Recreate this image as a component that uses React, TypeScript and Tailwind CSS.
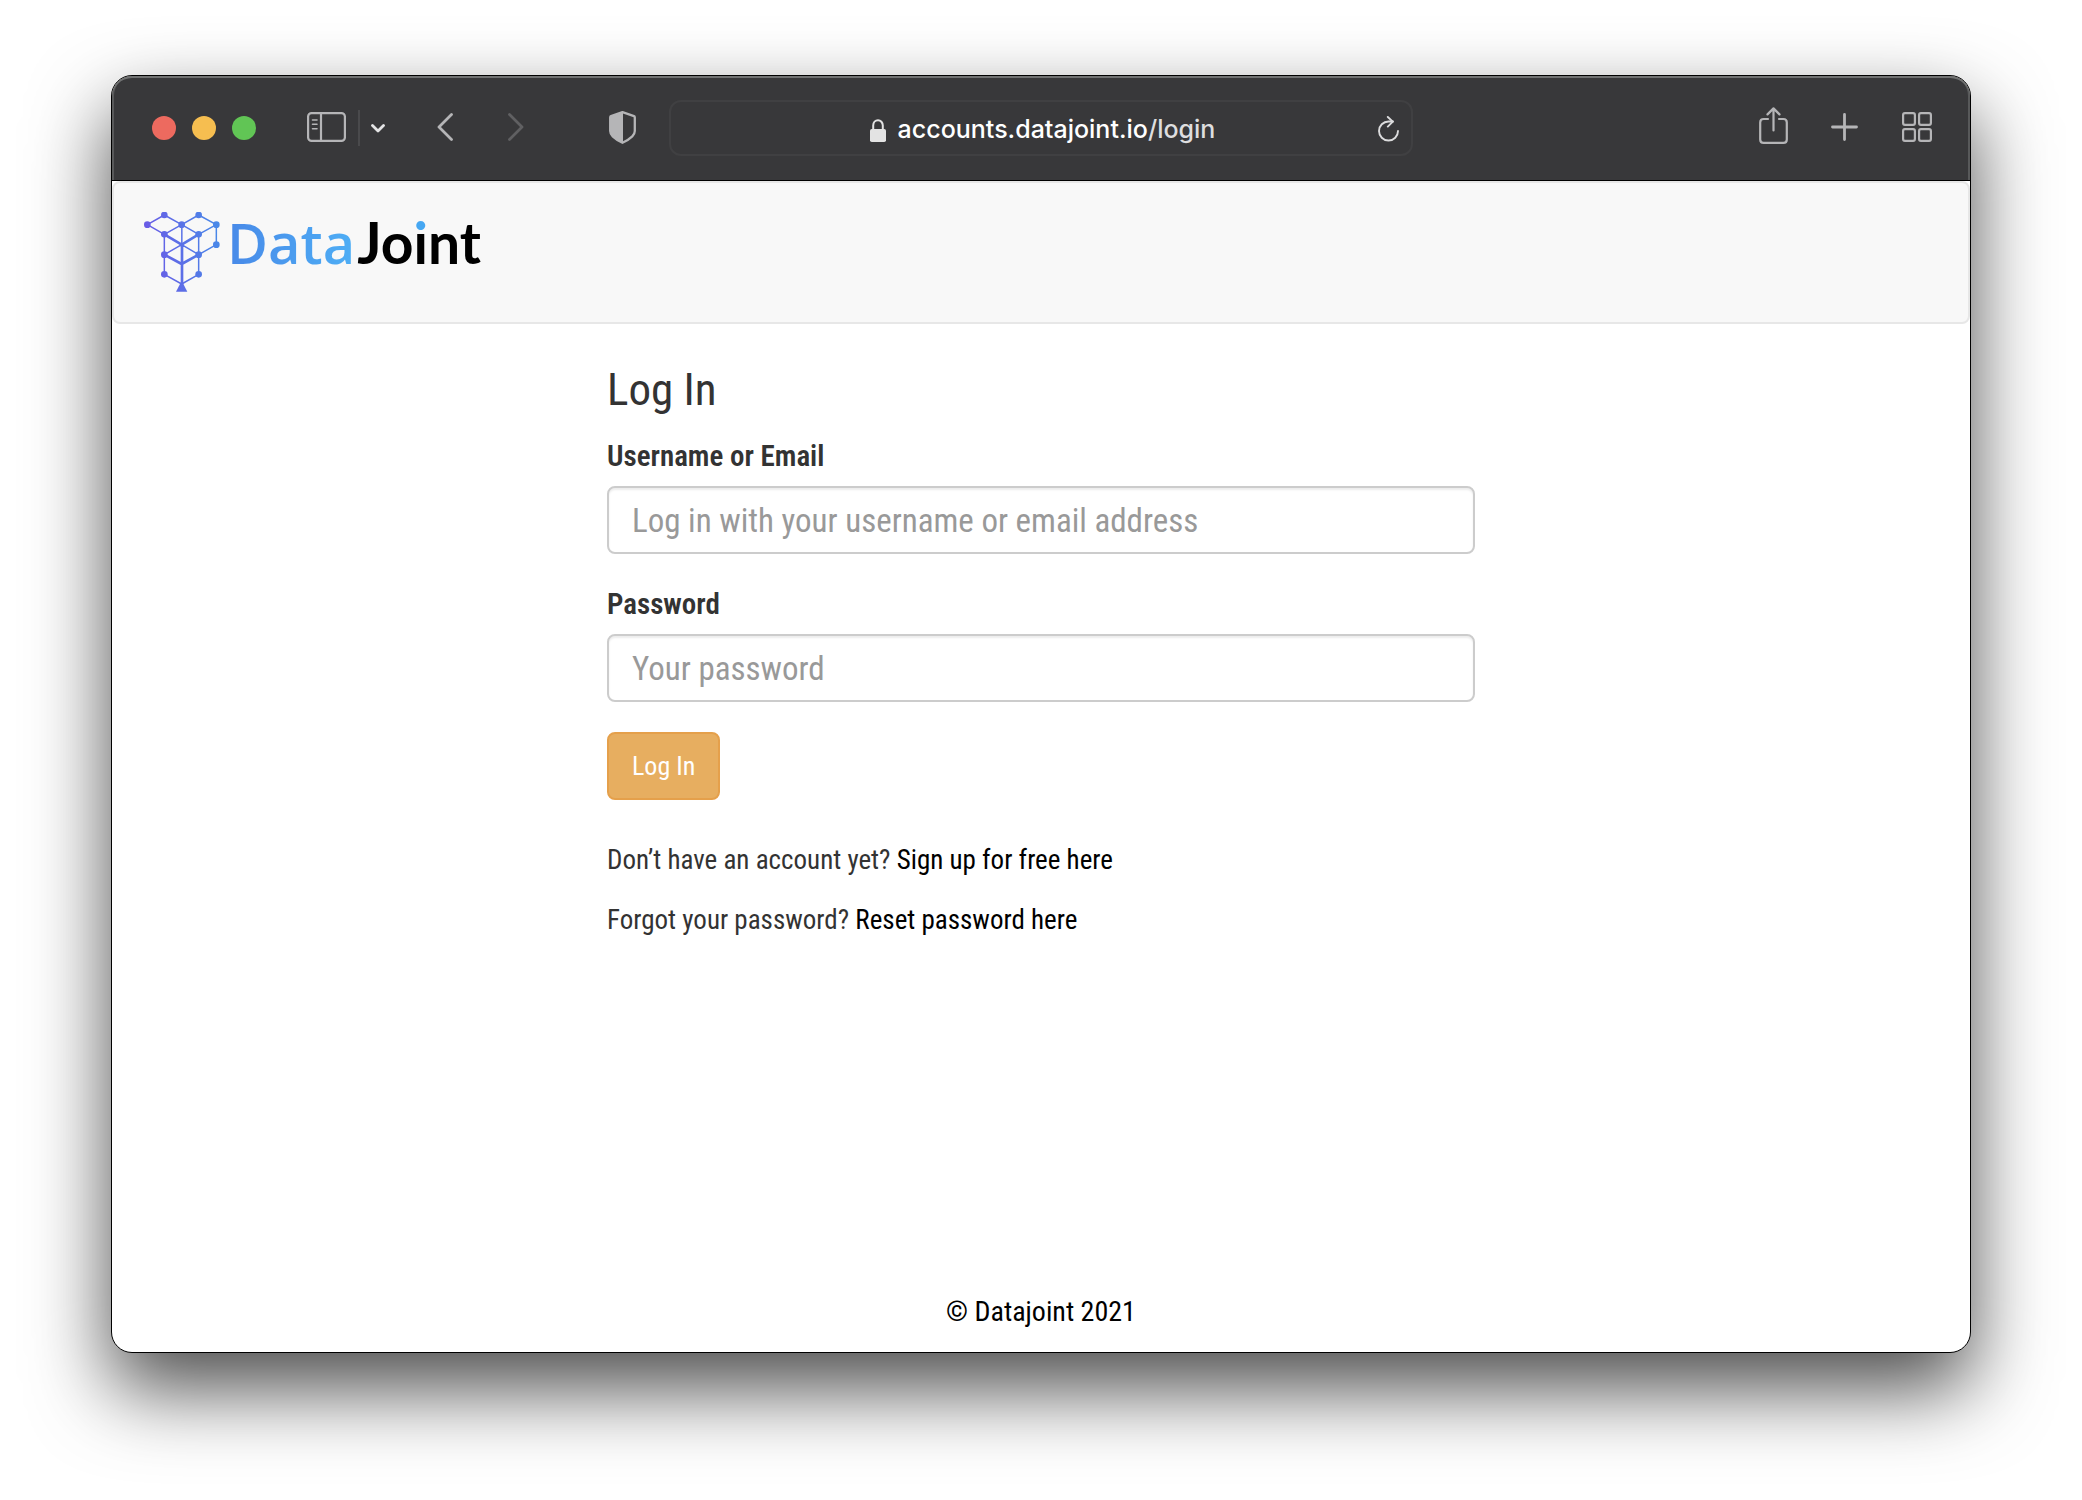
import type { ReactNode } from "react";

const narrow = "font-['Roboto_Condensed',Roboto,sans-serif]";

function IconButton({ label, children, className = "" }: { label: string; children: ReactNode; className?: string }) {
  return (
    <button type="button" aria-label={label} className={`shrink-0 ${className}`}>
      {children}
    </button>
  );
}

function TitleBar() {
  return (
    <header className="grid h-[105px] grid-cols-[3fr_4fr_3fr] items-center border-b border-black bg-[#38383a] text-[#b5b5b7] shadow-[inset_0_2px_0_#717272,inset_2px_0_0_#58595a,inset_-2px_0_0_#58595a] rounded-t-[20px]">
      <div className="flex items-center pr-[33px] pl-10">
        <div className="flex gap-4">
          <button type="button" aria-label="Close" className="size-6 rounded-full bg-[#ed6a5f]" />
          <button type="button" aria-label="Minimize" className="size-6 rounded-full bg-[#f6be50]" />
          <button type="button" aria-label="Zoom" className="size-6 rounded-full bg-[#61c555]" />
        </div>
        <IconButton label="Sidebar" className="ml-[51px] pb-0.5">
          <svg width="39" height="30" viewBox="0 0 39 30" fill="none" stroke="currentColor" strokeWidth="2.200">
            <rect x="1.100" y="1.100" width="36.800" height="27.800" rx="3.500" />
            <path d="M14 1v28" />
            <path d="M5.500 8h4.500M5.500 12.300h4.500M5.500 16.700h4.500" strokeWidth="1.600" strokeLinecap="round" />
          </svg>
        </IconButton>
        <div className="ml-3 h-9 w-0.5 bg-[#4a4a4c]" />
        <IconButton label="Tab groups" className="ml-[11px] text-[#e4e4e5]">
          <svg width="14" height="9" viewBox="0 0 14 9" fill="none" stroke="currentColor" strokeWidth="2.800" strokeLinecap="round" strokeLinejoin="round">
            <path d="M1.500 1.500L7 7l5.500-5.500" />
          </svg>
        </IconButton>
        <IconButton label="Back" className="ml-[52px] pb-0.5">
          <svg width="16" height="28" viewBox="0 0 16 28" fill="none" stroke="currentColor" strokeWidth="2.800" strokeLinecap="round" strokeLinejoin="round">
            <path d="M14.500 1.500L2 14l12.500 12.500" />
          </svg>
        </IconButton>
        <IconButton label="Forward" className="ml-[55px] pb-0.5 text-[#606062]">
          <svg width="16" height="28" viewBox="0 0 16 28" fill="none" stroke="currentColor" strokeWidth="2.800" strokeLinecap="round" strokeLinejoin="round">
            <path d="M1.500 1.500L14 14 1.500 26.500" />
          </svg>
        </IconButton>
        <IconButton label="Privacy report" className="ml-auto pb-0.5">
          <svg width="27" height="33" viewBox="0 0 27 33">
            <path d="M13.500 1.200L25 5.200q.8.300.8 1.200V20q0 3-2.500 5.300-4.300 4-9.800 6.500-5.500-2.500-9.800-6.500Q1.200 23 1.200 20V6.400q0-.900.800-1.200z" fill="none" stroke="currentColor" strokeWidth="2.300" strokeLinejoin="round" />
            <path d="M14 1.200v30.600q-6-2.500-10.300-6.500Q1.200 23 1.200 20V6.400q0-.900.800-1.200z" fill="currentColor" />
          </svg>
        </IconButton>
      </div>
      <div className="flex h-14 items-center rounded-xl border-2 border-[#404042] px-3">
        <div className="ml-6 flex flex-1 items-center justify-center gap-3 pt-1 font-[Inter,sans-serif] text-[25px]">
          <svg width="16" height="23" viewBox="0 0 16 23" fill="none" className="text-[#e3e3e3]">
            <path d="M3.200 11V6.500a4.800 5.300 0 0 1 9.600 0V11" stroke="currentColor" strokeWidth="2" />
            <rect y="10" width="16" height="13" rx="1.800" fill="currentColor" />
          </svg>
          <span className="font-medium text-white">
            accounts.datajoint.io<span className="text-[#dededf]">/login</span>
          </span>
        </div>
        <IconButton label="Reload" className="pt-0.5 text-[#dcdcdd]">
          <svg width="21" height="26" viewBox="0 0 21 26" fill="none" stroke="currentColor" strokeWidth="1.900" strokeLinecap="round" strokeLinejoin="round">
            <path d="M20 15a9.500 9.500 0 1 1-9.500-9.500H15" />
            <path d="M9.800 1l5 4.600-5 5" />
          </svg>
        </IconButton>
      </div>
      <div className="flex items-center justify-end pr-[38px]">
        <IconButton label="Share" className="pb-1.5">
          <svg width="29" height="37" viewBox="0 0 29 37" fill="none" stroke="currentColor" strokeWidth="2.200" strokeLinecap="round" strokeLinejoin="round">
            <path d="M9 12H4.600Q1.200 12 1.200 15.400v17q0 3.400 3.400 3.400h19.800q3.400 0 3.400-3.400v-17Q27.800 12 24.400 12H20" />
            <path d="M14.500 23.500V1.500M8.500 7.400l6-6 6 6" />
          </svg>
        </IconButton>
        <IconButton label="New tab" className="ml-[43px] pb-0.5">
          <svg width="27" height="28" viewBox="0 0 27 28" fill="none" stroke="currentColor" strokeWidth="2.800" strokeLinecap="round">
            <path d="M13.500 1.500v25M1.500 14h24" />
          </svg>
        </IconButton>
        <IconButton label="Tab overview" className="ml-11 pb-0.5">
          <svg width="30" height="30" viewBox="0 0 30 30" fill="none" stroke="currentColor" strokeWidth="2.200">
            <rect x="1.100" y="1.100" width="11.800" height="11.800" rx="1.800" />
            <rect x="17.100" y="1.100" width="11.800" height="11.800" rx="1.800" />
            <rect x="1.100" y="17.100" width="11.800" height="11.800" rx="1.800" />
            <rect x="17.100" y="17.100" width="11.800" height="11.800" rx="1.800" />
          </svg>
        </IconButton>
      </div>
    </header>
  );
}

const nodes = [
  [112, 134], [163, 105], [215, 134], [266, 105], [319, 134], [163, 163], [266, 163],
  [319, 194], [163, 224], [266, 224], [163, 283], [266, 283],
];

function Logo() {
  return (
    <a href="#home" aria-label="DataJoint home" className="flex items-start">
      <svg width="77" height="80" viewBox="102 96 231 240" fill="none" aria-hidden="true">
        <defs>
          <linearGradient id="mark" gradientUnits="userSpaceOnUse" x1="105" y1="160" x2="325" y2="130">
            <stop offset="0" stopColor="#6a5be6" />
            <stop offset="1" stopColor="#4889e8" />
          </linearGradient>
        </defs>
        <g stroke="url(#mark)" strokeWidth="4.500" strokeLinejoin="round">
          <path d="M112 134L163 105l52 29 51-29 53 29v60l-53 30M112 134l51 29 52-29 51 29 53-29M163 163v120l52 29 51-29V163M215.500 134v180M163 224l52-30 51 30" />
          <path d="M163 163l52 31 51-31M163 224l52 28 51-28M216 194v120" strokeWidth="8" />
        </g>
        <g fill="url(#mark)">
          {nodes.map(([x, y]) => (
            <circle key={`${x}-${y}`} cx={x} cy={y} r="10" />
          ))}
          <circle cx="215" cy="194" r="6" />
          <path d="M215 302l17 33h-34z" />
        </g>
      </svg>
      <span className="ml-1.5 flex items-baseline gap-0.5 leading-[60px]">
        <span className="bg-linear-to-r from-[#4889e8] to-[#4eaef5] bg-clip-text font-['Open_Sans',sans-serif] text-[56px] font-semibold text-transparent">
          Data
        </span>
        <span className="font-[Lato,sans-serif] text-[57px] font-bold text-black">
          Jo
          <span className="bg-linear-to-b from-[#46a7f2] from-36% to-black to-36% bg-clip-text text-transparent">i</span>
          nt
        </span>
      </span>
    </a>
  );
}

function Field({ id, label, type, placeholder }: { id: string; label: string; type: string; placeholder: string }) {
  return (
    <div className="mb-[30px]">
      <label htmlFor={id} className="mb-2.5 block text-[29px] leading-10 font-semibold">
        {label}
      </label>
      <input
        id={id}
        type={type}
        placeholder={placeholder}
        className="block h-[68px] w-full rounded-lg border-2 border-[#ccc] bg-white px-[23px] text-[33px] shadow-[inset_0_2px_2px_rgba(0,0,0,0.075)] outline-none placeholder:text-[#999]"
      />
    </div>
  );
}

export default function App() {
  return (
    <div className="flex min-h-screen flex-col bg-white px-[111px] pt-[75px] pb-[147px]">
      <div className={`flex flex-1 flex-col rounded-[21px] border border-black bg-white shadow-[0_36px_80px_rgba(0,0,0,0.7)] ${narrow}`}>
        <TitleBar />
        <nav className="rounded-lg border-2 border-[#e7e7e7] bg-[#f8f8f8] pt-[29px] pr-8 pb-[30px] pl-[30px]">
          <Logo />
        </nav>
        <main className="mx-auto w-full max-w-[868px] flex-1 pt-10 text-[27px] leading-10 text-[#333]">
          <h1 className="mb-5 text-[45px] leading-[52px]">Log In</h1>
          <form onSubmit={(e) => e.preventDefault()}>
            <Field id="username" label="Username or Email" type="text" placeholder="Log in with your username or email address" />
            <Field id="password" label="Password" type="password" placeholder="Your password" />
            <button type="submit" className="h-[68px] rounded-lg border-2 border-[#e5a04b] bg-[#e7ae60] px-[23px] text-[26px] text-white">
              Log In
            </button>
          </form>
          <p className="mt-10 mb-5">
            Don’t have an account yet? <a href="#signup" className="text-black">Sign up for free here</a>
          </p>
          <p>
            Forgot your password? <a href="#reset" className="text-black">Reset password here</a>
          </p>
        </main>
        <footer className="pb-5 text-center text-[28px] leading-10 text-black">© Datajoint 2021</footer>
      </div>
    </div>
  );
}
